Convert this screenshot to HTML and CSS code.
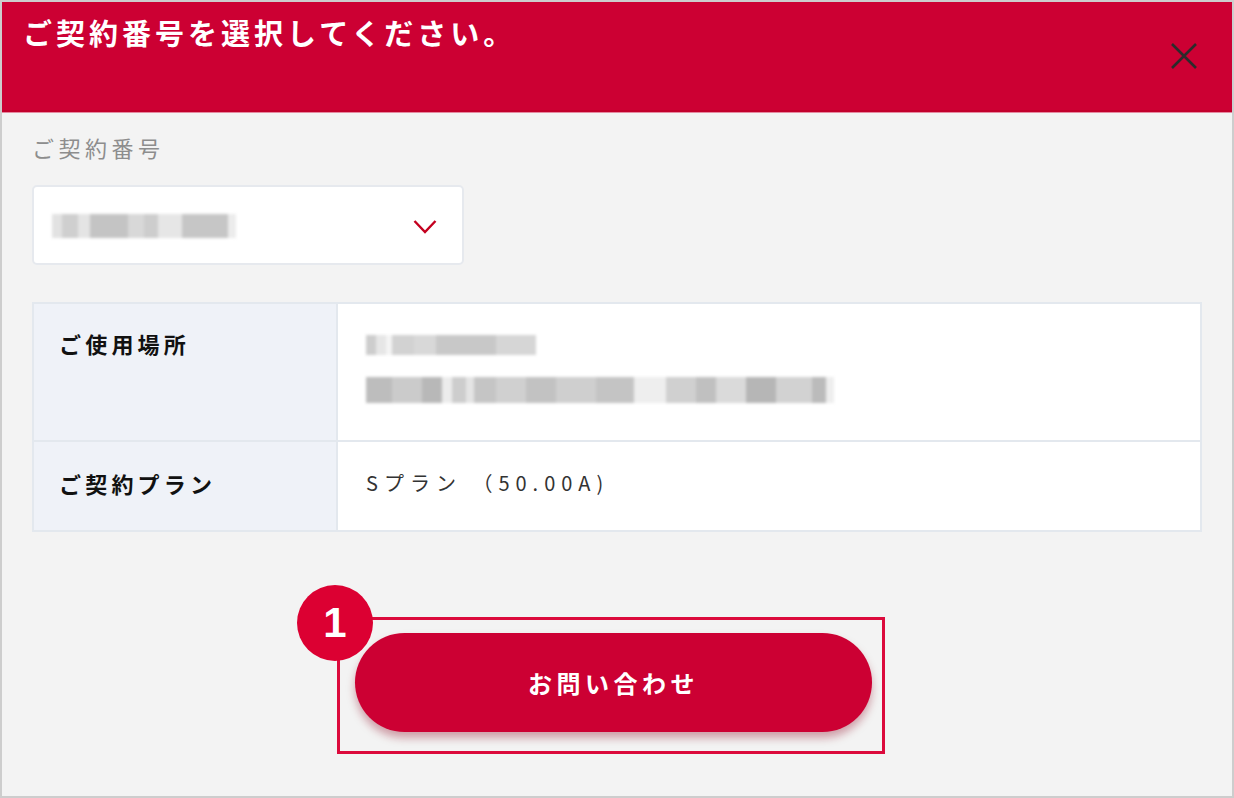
FILE: index.html
```html
<!DOCTYPE html>
<html lang="ja">

<head>
    <meta charset="UTF-8" />
    <title>ご契約番号の選択</title>
    <link rel="stylesheet" href="styles.css">
</head>

<body>

    <div class="modal">
        <div class="modal-header">
            <h1 class="modal-title">ご契約番号を選択してください。</h1>
            <button class="close-button" aria-label="閉じる">
                <svg width="28" height="28" viewBox="0 0 28 28">
                    <path d="M2 2 L26 26 M26 2 L2 26" stroke="#2b2b2b" stroke-width="2.6" fill="none" />
                </svg>
            </button>
        </div>

        <div class="modal-body">
            <div class="field-label">ご契約番号</div>

            <div class="select-box">
                <span class="mosaic mosaic-select"></span>
                <svg class="chevron" width="24" height="16" viewBox="0 0 24 16">
                    <polyline points="1.5,2 12,13 22.5,2" stroke="#c4001f" stroke-width="2.4" fill="none" />
                </svg>
            </div>

            <table class="info-table">
                <tr class="row-place">
                    <th>ご使用場所</th>
                    <td>
                        <div class="mosaic mosaic-line1"></div>
                        <div class="mosaic mosaic-line2"></div>
                    </td>
                </tr>
                <tr class="row-plan">
                    <th>ご契約プラン</th>
                    <td class="plan-value">Sプラン （50.00A)</td>
                </tr>
            </table>

            <div class="action-frame">
                <span class="step-badge">1</span>
                <button class="contact-button">お問い合わせ</button>
            </div>
        </div>
    </div>

</body>

</html>
```

FILE: styles.css
```css
body {
    margin: 0;
    background: #fff;
    font-family: "Noto Sans CJK JP", "Noto Sans", sans-serif;
}

.modal {
    width: 1234px;
    height: 798px;
    box-sizing: border-box;
    border: 2px solid #cdcdcd;
    background: #f3f3f3;
    display: flex;
    flex-direction: column;
}

.modal-header {
    height: 108px;
    background: #cc0033;
    border-bottom: 2px solid #c2002c;
    box-shadow: 0 1px 0 #e48aa0;
    display: flex;
    justify-content: space-between;
    align-items: flex-start;
    padding: 0 34px 0 21px;
}

.modal-title {
    margin: 12px 0 0;
    color: #fff;
    font-size: 29px;
    font-weight: bold;
    letter-spacing: 4px;
    line-height: 36px;
}

.close-button {
    margin-top: 40px;
    padding: 0;
    border: none;
    background: none;
    cursor: pointer;
    line-height: 0;
}

.modal-body {
    padding: 21px 30px 0 30px;
}

.field-label {
    color: #8d8d8d;
    font-size: 22px;
    letter-spacing: 4.5px;
    line-height: 28px;
}

.select-box {
    margin-top: 24px;
    width: 432px;
    height: 80px;
    box-sizing: border-box;
    background: #fff;
    border: 2px solid #e6e9ee;
    border-radius: 5px;
    display: flex;
    align-items: center;
    justify-content: space-between;
    padding: 0 25px 0 18px;
}

.chevron {
    margin-top: 4px;
}

/* モザイク（個人情報のぼかし） */
.mosaic {
    display: block;
    filter: blur(1.8px);
}

.mosaic-select {
    width: 184px;
    height: 24px;
    margin-top: 2px;
    background: linear-gradient(90deg,
            #e2e2e2 0 10px, #cfcfcf 10px 26px, #e4e4e4 26px 38px,
            #c4c4c4 38px 76px, #d8d8d8 76px 92px, #cdcdcd 92px 106px,
            #e6e6e6 106px 130px, #c6c6c6 130px 176px, #ececec 176px 184px);
}

.info-table {
    margin-top: 37px;
    width: 1170px;
    border-collapse: collapse;
    border: 2px solid #e3e8ee;
    background: #fff;
}

.info-table th,
.info-table td {
    border: 2px solid #e3e8ee;
}

.info-table th {
    width: 304px;
    box-sizing: border-box;
    background: #eff2f8;
    text-align: left;
    color: #111;
    font-size: 22px;
    letter-spacing: 4.2px;
    font-weight: bold;
    padding: 0 0 0 25px;
}

.info-table td {
    padding: 0 0 0 28px;
    color: #333;
}

.row-place th,
.row-place td {
    height: 138px;
    vertical-align: top;
    box-sizing: border-box;
}

.row-place th {
    padding-top: 23px;
}

.row-place td {
    padding-top: 31px;
}

.mosaic-line1 {
    width: 170px;
    height: 20px;
    background: linear-gradient(90deg,
            #cdcdcd 0 10px, #e6e6e6 10px 20px, #f4f4f4 20px 26px,
            #d2d2d2 26px 48px, #d8d8d8 48px 70px, #c8c8c8 70px 130px,
            #d6d6d6 130px 170px);
}

.mosaic-line2 {
    margin-top: 22px;
    width: 468px;
    height: 26px;
    background: linear-gradient(90deg,
            #bdbdbd 0 26px, #cbcbcb 26px 56px, #b8b8b8 56px 76px,
            #ececec 76px 86px, #cdcdcd 86px 100px, #e4e4e4 100px 108px,
            #c5c5c5 108px 130px, #d0d0d0 130px 160px, #c2c2c2 160px 190px,
            #cfcfcf 190px 230px, #c4c4c4 230px 268px, #eeeeee 268px 300px,
            #d0d0d0 300px 330px, #c0c0c0 330px 350px, #dadada 350px 380px,
            #b6b6b6 380px 410px, #d2d2d2 410px 446px, #bbbbbb 446px 460px,
            #eeeeee 460px 468px);
}

.row-plan th,
.row-plan td {
    height: 90px;
    box-sizing: border-box;
    vertical-align: middle;
    padding-bottom: 7px;
}

.plan-value {
    font-size: 20px;
    letter-spacing: 6px;
}

.action-frame {
    position: relative;
    margin: 85px 0 0 305px;
    width: 548px;
    box-sizing: border-box;
    border: 3px solid #dc0a3c;
    padding: 13px 10px 19px 15px;
}

.step-badge {
    position: absolute;
    left: -43px;
    top: -35px;
    width: 76px;
    height: 76px;
    border-radius: 50%;
    background: #dc0032;
    color: #fff;
    font-family: "Liberation Sans", Arial, sans-serif;
    font-weight: bold;
    font-size: 42px;
    line-height: 76px;
    text-align: center;
}

.contact-button {
    display: block;
    width: 517px;
    height: 99px;
    border: none;
    border-radius: 50px;
    background: #cc0033;
    color: #fff;
    font-family: inherit;
    font-size: 24px;
    font-weight: bold;
    letter-spacing: 4.5px;
    box-shadow: 0 6px 8px rgba(140, 0, 30, 0.35);
    cursor: pointer;
}
```
